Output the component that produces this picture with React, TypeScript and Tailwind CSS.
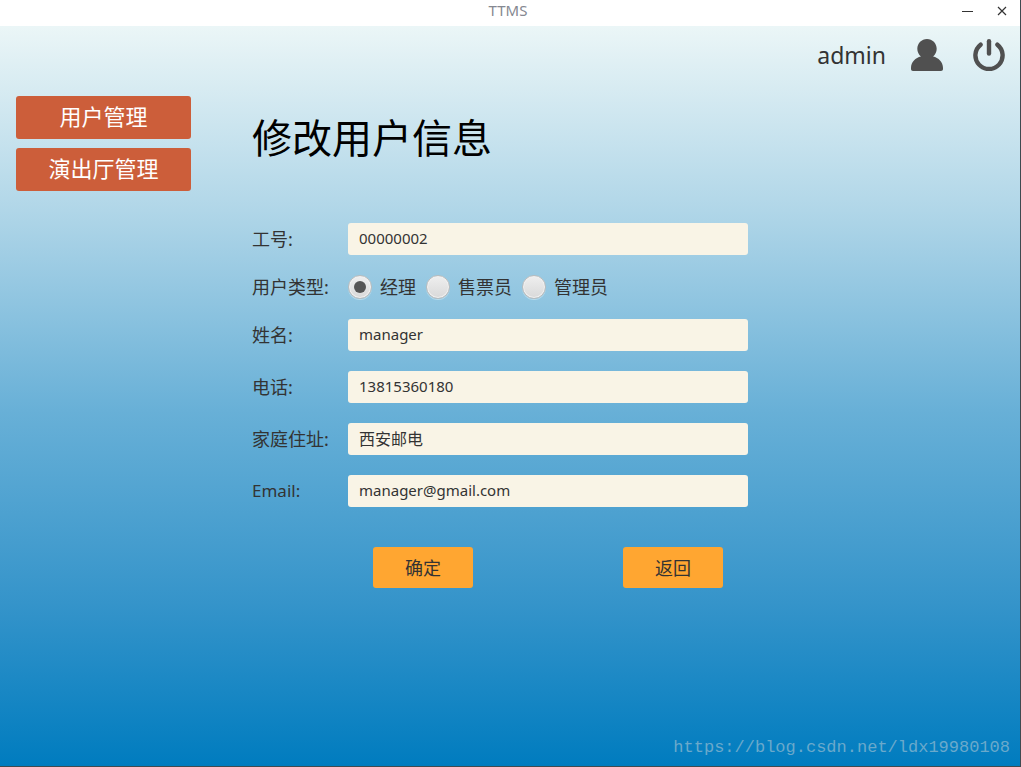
import { useState } from "react";

interface TextField {
  id: string;
  label: string;
  value: string;
  labelSize: string;
  size: string;
}

const menuItems = ["用户管理", "演出厅管理"];

const userTypes = ["经理", "售票员", "管理员"];

const numberField: TextField = {
  id: "number",
  label: "工号:",
  value: "00000002",
  labelSize: "text-lg",
  size: "text-[15px]",
};

const contactFields: TextField[] = [
  { id: "name", label: "姓名:", value: "manager", labelSize: "text-lg", size: "text-[15px]" },
  { id: "phone", label: "电话:", value: "13815360180", labelSize: "text-lg", size: "text-[15px]" },
  { id: "address", label: "家庭住址:", value: "西安邮电", labelSize: "text-lg", size: "text-base" },
  { id: "email", label: "Email:", value: "manager@gmail.com", labelSize: "text-[17px]", size: "text-[15px]" },
];

function TitleBar() {
  return (
    <div className="grid h-[26px] grid-cols-[1fr_auto_1fr] items-center bg-white pb-1">
      <span />
      <span className="pr-1 pb-0.5 text-[15px] leading-5 text-[#858891]">TTMS</span>
      <div className="flex justify-end gap-[19px] pr-[10px] text-[#333333]">
        <button type="button" aria-label="最小化" className="h-4 w-4">
          <svg viewBox="0 0 16 16" className="h-4 w-4" stroke="currentColor" fill="none">
            <path d="M3 8.5h11" />
          </svg>
        </button>
        <button type="button" aria-label="关闭" className="h-4 w-4">
          <svg viewBox="0 0 16 16" className="h-4 w-4" stroke="currentColor" fill="none">
            <path d="M4 4l8 8M12 4l-8 8" strokeWidth="1.2" />
          </svg>
        </button>
      </div>
    </div>
  );
}

function UserBar() {
  return (
    <header className="flex h-[58px] items-center justify-end gap-[30px] pr-[15px] text-[#505050]">
      <div className="flex items-center gap-[25px]">
        <span className="text-[23px] leading-8 text-[#333333]">admin</span>
        <svg viewBox="0 0 32 32" className="h-8 w-8" fill="currentColor">
          <path d="M16 0c-5.4 0-9.700 4.300-9.700 9.700 0 3.200 1.400 5.900 3.600 7.700C4.600 18.400 0 23.200 0 28.700V30c0 1.200.8 2 2 2h28c1.200 0 2-.8 2-2v-1.300c0-5.500-4.600-10.300-9.900-11.300 2.200-1.800 3.600-4.500 3.600-7.700C25.700 4.300 21.400 0 16 0z" />
        </svg>
      </div>
      <button type="button" aria-label="退出" className="h-8 w-8">
        <svg
          viewBox="0 0 32 32"
          className="h-8 w-8"
          fill="none"
          stroke="currentColor"
          strokeWidth="4.4"
          strokeLinecap="round"
        >
          <path d="M16 2.200v12.400" />
          <path d="M7.600 5.700a13.600 13.600 0 1 0 16.800 0" />
        </svg>
      </button>
    </header>
  );
}

function FieldRow({ field }: { field: TextField }) {
  return (
    <div className="flex items-center">
      <label htmlFor={field.id} className={`w-24 shrink-0 leading-6 ${field.labelSize}`}>
        {field.label}
      </label>
      <input
        id={field.id}
        type="text"
        defaultValue={field.value}
        className={`h-8 min-w-0 flex-1 rounded-[3px] bg-[#f9f4e6] px-[11px] pb-0.5 outline-none ${field.size}`}
      />
    </div>
  );
}

function UserTypeRow() {
  const [selected, setSelected] = useState(userTypes[0]);

  return (
    <div role="radiogroup" aria-labelledby="user-type" className="flex items-center text-lg leading-6">
      <span id="user-type" className="w-24 shrink-0">
        用户类型:
      </span>
      <div className="flex gap-[10px]">
        {userTypes.map((type) => (
          <label key={type} className="flex items-center gap-2">
            <input
              type="radio"
              name="userType"
              checked={selected === type}
              onChange={() => setSelected(type)}
              className="grid h-6 w-6 appearance-none place-items-center rounded-full border border-[#b9bcbd] bg-linear-to-b from-[#efefef] to-[#d9d9d9] shadow-[inset_0_0_0_1px_#f0f0f0,0_1px_0_#b8dced] before:h-3 before:w-3 before:rounded-full checked:before:bg-[#555555]"
            />
            {type}
          </label>
        ))}
      </div>
    </div>
  );
}

export default function App() {
  return (
    <div className="relative flex min-h-screen flex-col border-r border-b border-[#3f4a50] font-['Noto_Sans','Noto_Sans_CJK_SC',sans-serif] text-[#333333]">
      <TitleBar />
      <div className="flex flex-1 flex-col bg-[linear-gradient(to_bottom,#ebf6f7_0%,#b0d6e8_25%,#68b0d7_52%,#3594ca_78%,#007cbf_100%)]">
        <UserBar />
        <div className="flex gap-[61px] px-4 pt-3">
          <nav className="flex w-[175px] shrink-0 flex-col gap-[9px]">
            {menuItems.map((item) => (
              <button
                key={item}
                type="button"
                className="h-[43px] rounded-[3px] bg-[#cc5e3a] pb-1 text-[22px] leading-8 text-white"
              >
                {item}
              </button>
            ))}
          </nav>

          <main className="max-w-[496px] flex-1 pt-4">
            <h1 className="text-[40px] leading-[52px] text-black">修改用户信息</h1>
            <form className="mt-[59px] flex flex-col gap-5" onSubmit={(e) => e.preventDefault()}>
              <FieldRow field={numberField} />
              <UserTypeRow />
              {contactFields.map((field) => (
                <FieldRow key={field.id} field={field} />
              ))}
              <div className="mt-5 ml-24 flex justify-between px-[25px]">
                <button type="submit" className="h-[41px] w-[100px] rounded-[3px] bg-[#ffa631] text-lg">
                  确定
                </button>
                <button type="button" className="h-[41px] w-[100px] rounded-[3px] bg-[#ffa631] text-lg">
                  返回
                </button>
              </div>
            </form>
          </main>
        </div>
      </div>
      <p className="absolute right-[10px] bottom-[6px] font-['Liberation_Mono',monospace] text-[17px] leading-6 text-[#6aa9cb]">
        https://blog.csdn.net/ldx19980108
      </p>
    </div>
  );
}
